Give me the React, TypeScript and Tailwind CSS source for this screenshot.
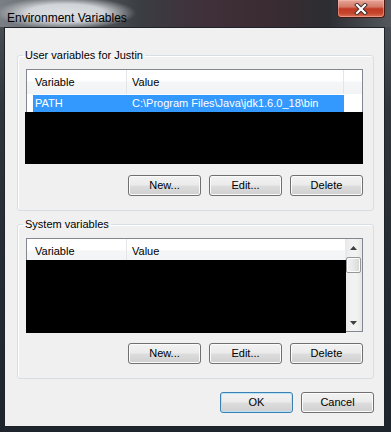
import React from "react";

const F = "font-['Liberation_Sans',Arial,sans-serif]";

function Btn({ label, def = false }: { label: string; def?: boolean }) {
  return (
    <div
      className={`w-[73px] h-[21px] rounded-[3px] border ${
        def ? "border-[#3c7fb1] shadow-[inset_0_0_0_1px_#b6e3f8]" : "border-[#707070] shadow-[inset_0_0_0_1px_#fbfbfb]"
      } bg-[linear-gradient(180deg,#f2f2f2_0%,#ebebeb_48%,#dddddd_52%,#cfcfcf_100%)] flex items-center justify-center text-[11px] leading-none text-black`}
    >
      {label}
    </div>
  );
}

function Header({ withScroll }: { withScroll: boolean }) {
  return (
    <div className="h-[24px] flex bg-[linear-gradient(180deg,#ffffff_0%,#ffffff_45%,#f5f6f7_50%,#f2f3f5_100%)] text-[11px] text-black">
      <div className="w-[100px] pl-[8px] flex items-center border-r border-[#e3e5e8]">Variable</div>
      <div className={`w-[217px] pl-[5px] flex items-center ${withScroll ? "" : "border-r border-[#e3e5e8]"}`}>Value</div>
      <div className="flex-1" />
    </div>
  );
}

function Group({ title, children, className = "" }: { title: string; children: React.ReactNode; className?: string }) {
  return (
    <fieldset
      className={`ml-[12px] w-[357px] border border-[#d5dfe5] rounded-[3px] pl-[8px] pr-[9px] pt-[7px] pb-[14px] shadow-[inset_1px_1px_0_#ffffff] ${className}`}
    >
      <legend className="-ml-[3px] px-[2px] h-[14px] leading-[14px] text-[11px] text-black">{title}</legend>
      {children}
    </fieldset>
  );
}

function Buttons() {
  return (
    <div className="flex justify-end gap-[8px] mr-[1px]">
      <Btn label="New..." />
      <Btn label="Edit..." />
      <Btn label="Delete" />
    </div>
  );
}

export default function App() {
  return (
    <div
      className={`${F} w-[391px] h-[432px] flex flex-col overflow-hidden bg-[linear-gradient(180deg,#50555b_0%,#30353b_25%,#262c33_60%,#1f252c_100%)]`}
    >
      {/* Title bar */}
      <div className="h-[27px] flex items-start justify-between bg-[linear-gradient(90deg,#7a7f85_0%,#5e6369_18%,#3a3d42_36%,#40303a_52%,#3b2c32_68%,#2c2d32_84%,#54585d_100%)]">
        <div className="w-[150px] h-[27px] pl-[7px] pt-[5px] bg-[radial-gradient(ellipse_70px_16px_at_66px_13px,rgba(228,231,234,0.95)_0%,rgba(228,231,234,0.85)_55%,rgba(228,231,234,0)_100%)]">
          <span className="text-[12px] leading-[16px] text-black">Environment Variables</span>
        </div>
        <div className="mr-[6px] w-[48px] h-[18px] rounded-b-[4px] border border-t-0 border-[#4a1a12] shadow-[inset_0_0_0_1px_rgba(255,200,190,0.45)] bg-[linear-gradient(180deg,#e6a496_0%,#d47a68_40%,#c23a24_52%,#c4452c_78%,#dc7358_100%)] flex items-center justify-center">
          <svg width="14" height="12" viewBox="0 0 14 12">
            <path d="M3 2 L11 10 M11 2 L3 10" stroke="#3b2a2a" strokeWidth="4" strokeLinecap="square" />
            <path d="M3 2 L11 10 M11 2 L3 10" stroke="#ffffff" strokeWidth="2.2" strokeLinecap="square" />
          </svg>
        </div>
      </div>

      {/* Client area */}
      <div className="ml-[4px] w-[381px] h-[400px] border border-[#1e2329] bg-[#f0f0f0] flex flex-col">
        <Group title="User variables for Justin" className="mt-[20px]">
          <div className="relative w-[337px] h-[94px] border border-[#828790] bg-white">
            <Header withScroll={false} />
            <div className="mt-[1px] ml-[6px] w-[311px] h-[17px] flex bg-[#3399ff] text-white text-[11px]">
              <div className="w-[94px] pl-[2px] flex items-center">PATH</div>
              <div className="pl-[5px] flex items-center whitespace-nowrap">C:\Program Files\Java\jdk1.6.0_18\bin</div>
            </div>
            <div className="absolute left-[-2px] top-[42px] w-[338px] h-[52px] bg-black" />
          </div>
          <div className="mt-[12px]">
            <Buttons />
          </div>
        </Group>

        <Group title="System variables" className="mt-[6px]">
          <div className="relative w-[337px] h-[94px] border border-[#828790] bg-white flex">
            <div className="flex-1">
              <Header withScroll={true} />
            </div>
            <div className="w-[17px] flex flex-col bg-[linear-gradient(90deg,#e8e8e8_0%,#f2f2f2_40%,#f2f2f2_70%,#e6e6e6_100%)]">
              <div className="h-[17px] flex items-center justify-center">
                <svg width="7" height="4" viewBox="0 0 7 4">
                  <path d="M0 4 L3.5 0 L7 4 Z" fill="#404040" />
                </svg>
              </div>
              <div className="mx-[1px] mt-[1px] h-[16px] rounded-[2px] border border-[#979797] shadow-[inset_0_0_0_1px_#fdfdfd] bg-[linear-gradient(90deg,#f3f3f3_0%,#e8e8e8_50%,#d6d6d6_100%)]" />
              <div className="flex-1" />
              <div className="h-[17px] flex items-center justify-center">
                <svg width="7" height="4" viewBox="0 0 7 4">
                  <path d="M0 0 L7 0 L3.5 4 Z" fill="#404040" />
                </svg>
              </div>
            </div>
            <div className="absolute left-[-1px] top-[21px] w-[320px] h-[73px] bg-black" />
          </div>
          <div className="mt-[11px]">
            <Buttons />
          </div>
        </Group>

        <div className="mt-[13px] mr-[10px] flex justify-end gap-[8px]">
          <Btn label="OK" def />
          <Btn label="Cancel" />
        </div>
      </div>
    </div>
  );
}
